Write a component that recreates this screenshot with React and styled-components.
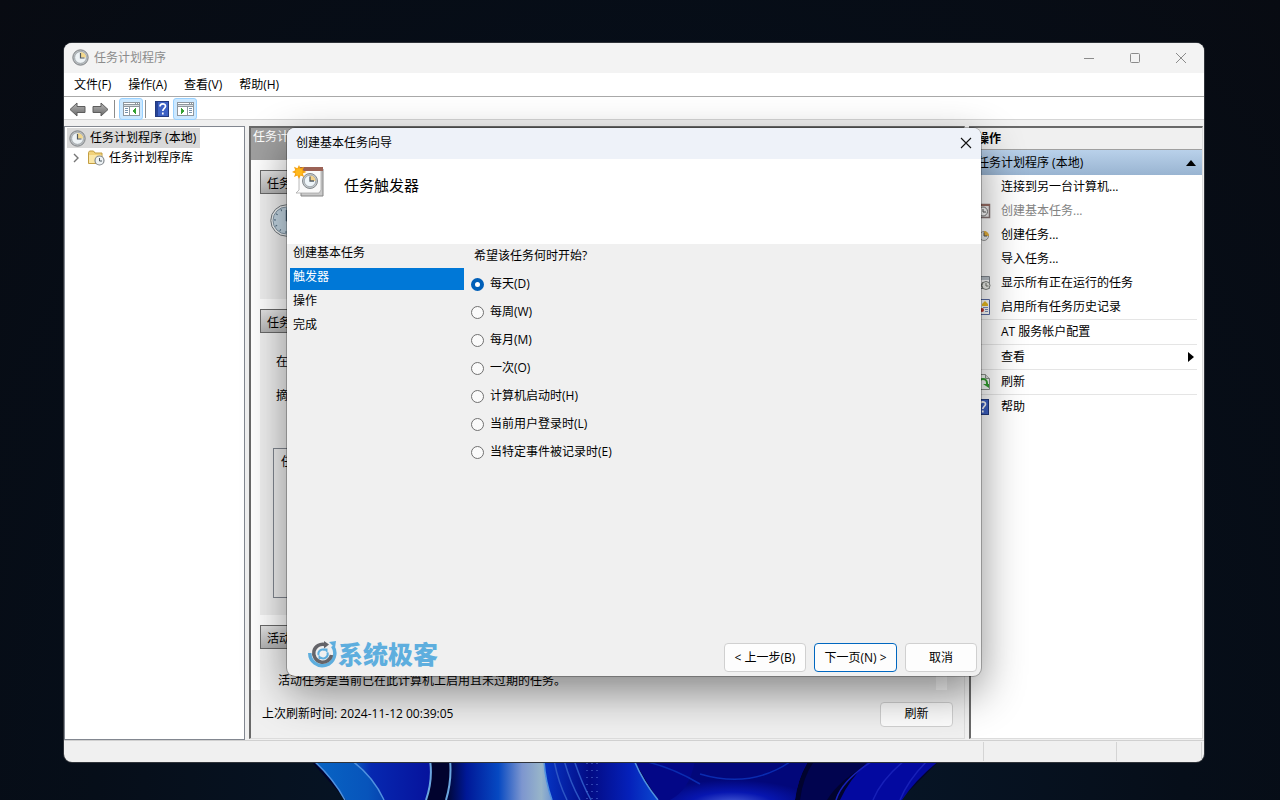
import React, { useState } from "react";
import styled, { createGlobalStyle, css } from "styled-components";

const triggers = [
  "每天(D)",
  "每周(W)",
  "每月(M)",
  "一次(O)",
  "计算机启动时(H)",
  "当前用户登录时(L)",
  "当特定事件被记录时(E)"
];

const steps = ["创建基本任务", "触发器", "操作", "完成"];

const App = () => {
  const [trigger, setTrigger] = useState(0);

  return (
    <Desktop>
      <GlobalStyle />
      <Wallpaper />
      <Window>
        <TitleBar>
          <ClockIcon />
          <WindowTitle>任务计划程序</WindowTitle>
          <CaptionButton aria-label="最小化">
            <svg width="12" height="12" fill="none" stroke="#8b8b8b">
              <path d="M1 6.5h10" />
            </svg>
          </CaptionButton>
          <CaptionButton aria-label="最大化">
            <svg width="12" height="12" fill="none" stroke="#8b8b8b">
              <rect x="1.5" y="1.5" width="9" height="9" rx="1" />
            </svg>
          </CaptionButton>
          <CaptionButton aria-label="关闭">
            <svg width="12" height="12" fill="none" stroke="#8b8b8b">
              <path d="M1 1l10 10M11 1L1 11" />
            </svg>
          </CaptionButton>
        </TitleBar>
        <MenuBar>
          <MenuButton>文件(F)</MenuButton>
          <MenuButton>操作(A)</MenuButton>
          <MenuButton>查看(V)</MenuButton>
          <MenuButton>帮助(H)</MenuButton>
        </MenuBar>
        <ToolBar>
          <ToolButton aria-label="后退">
            <ArrowIcon />
          </ToolButton>
          <ToolButton aria-label="前进">
            <ArrowIcon flip />
          </ToolButton>
          <Divider />
          <ToolButton $active aria-label="显示控制台树">
            <PaneIcon />
          </ToolButton>
          <Divider />
          <ToolButton aria-label="帮助">
            <HelpIcon />
          </ToolButton>
          <ToolButton $active aria-label="显示操作窗格">
            <PaneIcon right />
          </ToolButton>
        </ToolBar>

        <Body>
          <Tree>
            <TreeRoot>
              <ClockIcon />
              任务计划程序 (本地)
            </TreeRoot>
            <TreeChild>
              <svg width="8" height="10" fill="none" stroke="#767676" strokeWidth="1.4">
                <path d="M2 1l4 4-4 4" />
              </svg>
              <FolderIcon />
              任务计划程序库
            </TreeChild>
          </Tree>

          <Summary>
            <SummaryTitle>任务计</SummaryTitle>
            <SummaryScroll>
              <Section>
                <SectionHead>任务</SectionHead>
                <Overview>
                  <BigClockIcon />
                </Overview>
              </Section>
              <Section $grow>
                <SectionHead>任务</SectionHead>
                <Status>
                  <StatusText>在</StatusText>
                  <StatusText>摘</StatusText>
                  <TaskList>任</TaskList>
                </Status>
              </Section>
              <Section>
                <SectionHead>活动</SectionHead>
                <Active>活动任务是当前已在此计算机上启用且未过期的任务。</Active>
              </Section>
            </SummaryScroll>
            <SummaryFooter>
              上次刷新时间: 2024-11-12 00:39:05
              <RefreshButton>刷新</RefreshButton>
            </SummaryFooter>
          </Summary>

          <Actions>
            <ActionsTitle>操作</ActionsTitle>
            <ActionsGroup>
              任务计划程序 (本地)
              <svg width="10" height="6">
                <path d="M0 6L5 0l5 6z" />
              </svg>
            </ActionsGroup>
            <Action>
              <IconSlot />
              连接到另一台计算机...
            </Action>
            <Action disabled>
              <IconSlot>
                <TaskIcon />
              </IconSlot>
              创建基本任务...
            </Action>
            <Action>
              <IconSlot>
                <NewTaskIcon />
              </IconSlot>
              创建任务...
            </Action>
            <Action>
              <IconSlot />
              导入任务...
            </Action>
            <Action>
              <IconSlot>
                <RunningIcon />
              </IconSlot>
              显示所有正在运行的任务
            </Action>
            <Action>
              <IconSlot>
                <HistoryIcon />
              </IconSlot>
              启用所有任务历史记录
            </Action>
            <Rule />
            <Action>
              <IconSlot />
              AT 服务帐户配置
            </Action>
            <Rule />
            <Action>
              <IconSlot />
              查看
              <SubmenuArrow width="6" height="10">
                <path d="M0 0l6 5-6 5z" />
              </SubmenuArrow>
            </Action>
            <Rule />
            <Action>
              <IconSlot>
                <RefreshIcon />
              </IconSlot>
              刷新
            </Action>
            <Rule />
            <Action>
              <IconSlot>
                <HelpIcon />
              </IconSlot>
              帮助
            </Action>
          </Actions>
        </Body>

        <StatusBar>
          <StatusCell $width={133} />
          <StatusCell $width={85} />
          <StatusCell $width={3} />
        </StatusBar>

        <Dialog role="dialog" aria-label="创建基本任务向导">
          <DialogTitle>
            创建基本任务向导
            <CloseButton aria-label="关闭">
              <svg width="12" height="12" fill="none" stroke="#111" strokeWidth="1.1">
                <path d="M1 1l10 10M11 1L1 11" />
              </svg>
            </CloseButton>
          </DialogTitle>
          <DialogHeader>
            <WizardIcon />
            <Heading>任务触发器</Heading>
          </DialogHeader>
          <DialogBody>
            <Steps>
              {steps.map((step, i) => (
                <Step key={step} $current={i === 1}>
                  {step}
                </Step>
              ))}
            </Steps>
            <Options>
              <Legend>希望该任务何时开始?</Legend>
              {triggers.map((label, i) => (
                <Option key={label}>
                  <Radio
                    type="radio"
                    name="trigger"
                    checked={trigger === i}
                    onChange={() => setTrigger(i)}
                  />
                  {label}
                </Option>
              ))}
            </Options>
          </DialogBody>
          <DialogFooter>
            <Brand>
              <BrandIcon />
              系统极客
            </Brand>
            <Button $width={82}>&lt; 上一步(B)</Button>
            <Button $width={83} $primary>
              下一页(N) &gt;
            </Button>
            <Button $width={72}>取消</Button>
          </DialogFooter>
        </Dialog>
      </Window>
    </Desktop>
  );
};

export default App;

const ClockIcon = () => (
  <svg width="17" height="17" viewBox="0 0 17 17">
    <circle cx="8.5" cy="8.5" r="7.7" fill="#b9bdc0" stroke="#808487" />
    <circle cx="8.5" cy="8.5" r="5.8" fill="#eef3f6" stroke="#9aa0a4" strokeWidth=".7" />
    <path d="M8.5 8.5V3A5.5 5.5 0 0 1 14 8.5z" fill="#f3d88c" />
    <path d="M8.5 4v5h4" fill="none" stroke="#50585e" strokeWidth="1.2" />
  </svg>
);

const BigClockIcon = () => (
  <svg width="33" height="33" viewBox="0 0 33 33">
    <circle cx="16.5" cy="16.5" r="15.7" fill="#f4f6f7" stroke="#70777c" />
    <circle cx="16.5" cy="16.5" r="13.5" fill="#c6d9e6" stroke="#8296a5" />
    <circle
      cx="16.5"
      cy="16.5"
      r="11.5"
      fill="none"
      stroke="#5b7487"
      strokeWidth="2"
      strokeDasharray="1 5"
    />
    <path d="M16.5 6v11M16.5 17h7" fill="none" stroke="#48647a" strokeWidth="1.5" />
  </svg>
);

const ArrowIcon = ({ flip }) => (
  <svg width="17" height="15" viewBox="0 0 17 15">
    <defs>
      <linearGradient id="arrow" x2="0" y2="1">
        <stop stopColor="#b7b7b7" />
        <stop offset="1" stopColor="#696969" />
      </linearGradient>
    </defs>
    <path
      d="M1 7.5L8 1v3.500h8v6H8V14z"
      fill="url(#arrow)"
      stroke="#5d5d5d"
      transform={flip ? "matrix(-1 0 0 1 17 0)" : undefined}
    />
  </svg>
);

const PaneIcon = ({ right }) => (
  <svg width="17" height="14" viewBox="0 0 17 14" shapeRendering="crispEdges">
    <path d="M0 0h17v14H0z" fill="#8f979e" />
    <path d="M1 1h11v1H1zM13 1h1v1h-1zM15 1h1v1h-1z" fill="#fff" />
    <path d="M1 3h15v1H1z" fill="#d8dde1" />
    <path d={right ? "M1 5h9v8H1zM11 5h5v8h-5z" : "M1 5h5v8H1zM7 5h9v8H7z"} fill="#fff" />
    <path
      d={right ? "M12 6.5h3M12 8.5h3M12 10.5h3" : "M2 6.5h3M2 8.5h3M2 10.5h3"}
      stroke="#7893ad"
    />
    <path d={right ? "M4 6l4 3-4 3z" : "M13 6L9 9l4 3z"} fill="#35a132" />
  </svg>
);

const HelpIcon = () => (
  <svg width="14" height="16" viewBox="0 0 14 16">
    <rect x=".5" y=".5" width="13" height="15" fill="#3d61c4" stroke="#223a80" />
    <path d="M1 1h2v14H1z" fill="#274497" />
    <path
      d="M5 5.5C5 2 10.500 2 10.500 5.200c0 2-2.700 2.300-2.700 4.800M7.800 11.500v2"
      fill="none"
      stroke="#fff"
      strokeWidth="1.7"
    />
  </svg>
);

const FolderIcon = () => (
  <svg width="17" height="16" viewBox="0 0 17 16">
    <path d="M.5 2.5L1.500 1h4L7 3h7v10.500H.5z" fill="#f1d27b" stroke="#c39e43" />
    <path d="M1 5h12.500v8H1z" fill="#fae7a8" />
    <circle cx="11.5" cy="10.5" r="4.5" fill="#edf2f5" stroke="#82888d" strokeWidth="1.2" />
    <path d="M11.5 8v3H14" fill="none" stroke="#4b5960" />
  </svg>
);

const TaskIcon = () => (
  <svg width="16" height="16" viewBox="0 0 16 16">
    <rect x="1.5" y="1.5" width="13" height="13" fill="#f0eeee" stroke="#877" strokeWidth="1.5" />
    <path d="M1 1h14v2H1z" fill="#9b6f65" />
    <circle cx="8" cy="8.5" r="4.5" fill="#fff" stroke="#777" />
    <path d="M8 6v3h3" fill="none" stroke="#555" />
  </svg>
);

const NewTaskIcon = () => (
  <svg width="16" height="16" viewBox="0 0 16 16">
    <circle cx="9" cy="9" r="4.5" fill="#eef2f4" stroke="#999" />
    <path d="M9 9V4a5 5 0 0 1 5 5z" fill="#e9b33d" />
    <path d="M9 5.5V9h3" fill="none" stroke="#555" />
  </svg>
);

const RunningIcon = () => (
  <svg width="16" height="16" viewBox="0 0 16 16">
    <path d="M.5 1.5h14v12H.5z" fill="#fff" stroke="#838990" />
    <path d="M1 2h13v3H1z" fill="#bac2ca" />
    <circle cx="11" cy="10.5" r="4" fill="#f3f4ef" stroke="#7d817d" />
    <path d="M11 8v3h2.500M5 8l3 6M8 7l-4 6" fill="none" stroke="#70756d" />
  </svg>
);

const HistoryIcon = () => (
  <svg width="16" height="16" viewBox="0 0 16 16">
    <path d="M1.5 .5h13v15h-13z" fill="#fff" stroke="#596ba4" />
    <path d="M10 2l3 3v2H7V5z" fill="#edbe22" />
    <path d="M8 8.500h5M10 10.500h3M10 12.500h3" stroke="#7b91bd" />
    <circle cx="7" cy="11" r="2" fill="#bd3431" />
  </svg>
);

const RefreshIcon = () => (
  <svg width="16" height="16" viewBox="0 0 16 16">
    <path d="M1.5 .5h9l4 4v11h-13z" fill="#f7faf7" stroke="#8c938c" />
    <path d="M10.5 .5v4h4" fill="#ddd" stroke="#8c938c" />
    <path d="M4 9a4 4 0 0 1 8 0v2" fill="none" stroke="#34a030" strokeWidth="2" />
    <path d="M8 10h6v4z" fill="#34a030" />
  </svg>
);

const WizardIcon = () => (
  <svg width="33" height="33" viewBox="0 0 33 33">
    <path d="M9 4h22v27H9z" fill="#c9c9c9" stroke="#858585" />
    <path d="M7 4h22v21l-2 3H4l3-3z" fill="#fafafa" stroke="#a8a8a8" strokeWidth=".8" />
    <path d="M7 2h24v4H7z" fill="#9b6256" />
    <circle cx="18" cy="16" r="7.500" fill="#c4c9cc" stroke="#83898d" />
    <circle cx="18" cy="16" r="5.700" fill="#eef5f9" stroke="#90979c" strokeWidth=".7" />
    <path d="M18 16v-5.500a5.500 5.500 0 0 1 5.500 5.500z" fill="#f4d38b" />
    <path d="M18 11.500V16h4" fill="none" stroke="#555f67" strokeWidth="1.3" />
    <path
      d="M7 0l1.500 3.300L12 1.800l-1.300 3.500L14.500 7l-3.800 1.500 1.500 3.600-3.600-1.500L7 14l-1.600-3.400L2 12.100l1.300-3.600L0 7l3.300-1.700L2 1.800l3.400 1.500z"
      fill="#f5a313"
    />
    <circle cx="7" cy="7" r="3.500" fill="#ffb91c" />
  </svg>
);

const BrandIcon = () => (
  <svg width="30" height="27" viewBox="0 0 30 27" fill="none">
    <path d="M1.800 12A12.500 12.500 0 1 0 24.500 5" stroke="#5eaede" strokeWidth="3.500" />
    <path d="M21 1l7-1-1 7z" fill="#5eaede" />
    <path d="M17 3.500A9 9 0 1 0 23.500 14" stroke="#646469" strokeWidth="3.500" />
    <path d="M16 0l5 3.500-5 4z" fill="#646469" />
    <path d="M10.500 14a4.500 4.500 0 0 1 6.500-5" stroke="#5eaede" strokeWidth="2" />
    <path d="M19.500 11.500A4.500 4.500 0 0 1 12.500 16.500" stroke="#5eaede" strokeWidth="2" />
    <path d="M15 7.500h4.500V12z" fill="#5eaede" />
    <path d="M10.500 13.500V18H15z" fill="#5eaede" />
  </svg>
);

const Wallpaper = () => (
  <Bloom viewBox="0 0 660 40" preserveAspectRatio="none" aria-hidden="true">
    <defs>
      <linearGradient id="petalA">
        <stop stopColor="#0865c4" />
        <stop offset=".5" stopColor="#0754bb" />
        <stop offset="1" stopColor="#021a94" />
      </linearGradient>
      <linearGradient id="petalB">
        <stop stopColor="#0865c4" />
        <stop offset=".25" stopColor="#0628b0" />
        <stop offset="1" stopColor="#06129c" />
      </linearGradient>
      <linearGradient id="core">
        <stop stopColor="#00052c" />
        <stop offset=".2" stopColor="#001897" />
        <stop offset=".5" stopColor="#0649c2" />
        <stop offset=".72" stopColor="#7d96cf" />
        <stop offset=".9" stopColor="#98b5c9" />
        <stop offset="1" stopColor="#7097d3" />
      </linearGradient>
      <linearGradient id="petalC">
        <stop stopColor="#0635c4" />
        <stop offset=".4" stopColor="#030b84" />
        <stop offset=".75" stopColor="#0521ba" />
        <stop offset="1" stopColor="#0b48d0" />
      </linearGradient>
      <radialGradient id="petalD" cx=".45" cy="1.1" r=".6">
        <stop stopColor="#4b60d8" />
        <stop offset=".5" stopColor="#0716b0" />
        <stop offset="1" stopColor="#02077a" />
      </radialGradient>
    </defs>
    <path d="M10 0h630l-40 40H46z" fill="#01032e" />
    <path d="M13 0h70l40 40H46Q31 17 13 0z" fill="url(#petalA)" />
    <path d="M51 0h79q4 18-4 40H83Q73 15 51 0z" fill="url(#petalB)" />
    <path d="M150 0h94q1 20 8 40H145q7-20 5-40z" fill="url(#core)" />
    <path d="M244 0h90q11 23 24 40H252q-7-20-8-40z" fill="url(#petalC)" />
    <path d="M334 0h175q-12 20-14 40H358Q345 20 334 0z" fill="#030787" />
    <path d="M395 0h113q-10 18-13 40H370q20-10 25-40z" fill="url(#petalD)" />
    <path d="M515 0h62q-36 17-50 40h-27q3-24 15-40z" fill="#01044f" />
    <path d="M570 0h70q-24 19-38 40h-62q10-22 30-40z" fill="#0309a0" />
    <g fill="none" stroke="#4f91e0" strokeWidth="1.5">
      <path d="M13 0q20 18 32 40M51 0q22 16 33 40" />
      <path d="M130 0q3 20-4 40M150 0q2 20-4 40" stroke="#6ba6df" strokeWidth="2" />
      <path d="M244 0q1 20 8 40M334 0q8 20 24 40" />
      <path d="M254 0q4 22 13 40M264 0q6 22 16 40M274 0q8 24 17 40" stroke="#2c55c4" />
      <path d="M340 0q32 7 60 24M400 14q50 15 90-12" stroke="#0a2bb0" />
      <path d="M574 0q-32 20-38 40M605 0q-24 20-32 40M628 0q-20 20-28 40" stroke="#1720b8" />
    </g>
    <path
      d="M287 3v36M292 3v36M297 3v36"
      stroke="#5878d8"
      strokeWidth="1"
      strokeDasharray="1 6"
    />
  </Bloom>
);

const GlobalStyle = createGlobalStyle`
  * {
    box-sizing: border-box;
  }
  body {
    margin: 0;
    background: #060c16;
    color: #000;
    font: 12px/18px "Open Sans", "Noto Sans CJK SC", sans-serif;
  }
  button {
    font: inherit;
    color: inherit;
    border: 0;
    padding: 0;
    background: none;
    white-space: nowrap;
  }
  svg {
    flex: none;
  }
`;

const Desktop = styled.div`
  position: relative;
  display: flex;
  min-height: 100vh;
  padding: 43px 76px 38px 64px;
  overflow: hidden;
  background: radial-gradient(ellipse at 50% 100%, #061a30, #060e19 60%, #080b12);
`;

const Bloom = styled.svg`
  position: absolute;
  left: 50%;
  bottom: 0;
  width: 660px;
  height: 40px;
  margin-left: -340px;
`;

const Window = styled.div`
  position: relative;
  display: flex;
  flex-direction: column;
  flex: 1;
  min-width: 0;
  border-radius: 8px;
  overflow: hidden;
  background: #f0f0f0;
  box-shadow: 0 0 0 1px #30343a;
`;

const TitleBar = styled.header`
  display: flex;
  align-items: center;
  height: 30px;
  padding: 0 0 1px 8px;
  background: #f3f3f3;
  color: #8b8b8b;
`;

const WindowTitle = styled.span`
  flex: 1;
  padding-left: 5px;
`;

const CaptionButton = styled.button`
  display: flex;
  align-items: center;
  justify-content: center;
  width: 46px;
  height: 29px;
`;

const MenuBar = styled.nav`
  display: flex;
  gap: 17px;
  height: 24px;
  padding: 0 10px;
  background: #fff;
  border-bottom: 1px solid #aaa;
`;

const MenuButton = styled.button`
  height: 23px;
`;

const ToolBar = styled.div`
  display: flex;
  align-items: center;
  height: 23px;
  padding: 2px 0 0 2px;
  background: #fff;
  border-bottom: 1px solid #d5d5d5;
`;

const ToolButton = styled.button`
  display: flex;
  align-items: center;
  justify-content: center;
  width: 23px;
  height: 22px;
  ${({ $active }) =>
    $active &&
    css`
      width: 24px;
      background: #cce8ff;
      border: 1px solid #99d1ff;
      border-radius: 3px;
    `}
`;

const Divider = styled.span`
  width: 1px;
  height: 18px;
  margin: 0 4px 0 2px;
  background: #8c8c8c;
`;

const Body = styled.main`
  display: grid;
  grid-template-columns: 181px minmax(0, 1fr) 235px;
  gap: 4px;
  flex: 1;
  min-height: 0;
  padding-top: 6px;
`;

const Tree = styled.div`
  padding: 1px 2px;
  background: #fff;
  border: 1px solid #828790;
`;

const TreeRoot = styled.div`
  display: flex;
  align-items: center;
  gap: 4px;
  width: fit-content;
  height: 20px;
  padding: 0 4px 0 2px;
  background: #d9d9d9;
`;

const TreeChild = styled.div`
  display: flex;
  align-items: center;
  gap: 4px;
  height: 20px;
  padding-left: 5px;

  svg + svg {
    margin-left: 4px;
  }
`;

const Summary = styled.section`
  display: flex;
  flex-direction: column;
  min-height: 0;
  margin-bottom: 1px;
  border: 1px solid #dcdcdc;
  border-top: 2px solid #696969;
  border-left: 2px solid #696969;
`;

const SummaryTitle = styled.div`
  height: 32px;
  padding-left: 2px;
  background: #a0a0a0;
  color: #fff;
`;

const SummaryScroll = styled.div`
  display: flex;
  flex-direction: column;
  flex: 1;
  gap: 10px;
  min-height: 0;
  padding: 10px 11px 0 9px;
  background: #fff;
  border-right: 17px solid #f0f0f0;
  overflow: hidden;
`;

const Section = styled.div`
  display: flex;
  flex-direction: column;
  flex: ${({ $grow }) => ($grow ? "1" : "none")};
`;

const SectionHead = styled.div`
  height: 24px;
  padding: 4px 6px 0;
  background: linear-gradient(#e4e4e4, #b4b4b4);
  border: 1px solid #696969;
`;

const Overview = styled.div`
  height: 105px;
  padding: 10px;
  background: #f0f0f0;
`;

const Status = styled.div`
  display: flex;
  flex-direction: column;
  flex: 1;
  gap: 16px;
  padding: 20px 13px 17px;
  background: #f0f0f0;
`;

const StatusText = styled.div`
  padding-left: 3px;
`;

const TaskList = styled.div`
  flex: 1;
  margin-top: 27px;
  padding: 4px 7px;
  border: 1px solid #828790;
`;

const Active = styled.div`
  height: 41px;
  padding: 23px 18px 0;
  background: #f0f0f0;
`;

const SummaryFooter = styled.div`
  display: flex;
  align-items: center;
  justify-content: space-between;
  height: 48px;
  padding: 0 11px;
`;

const RefreshButton = styled.button`
  width: 73px;
  height: 25px;
  background: #fdfdfd;
  border: 1px solid #d0d0d0;
  border-radius: 4px;
`;

const Actions = styled.aside`
  display: flex;
  flex-direction: column;
  margin: 0 1px 1px 0;
  background: #fff;
  border: 1px solid #dcdcdc;
  border-top: 2px solid #696969;
  border-left: 2px solid #696969;
`;

const ActionsTitle = styled.div`
  height: 22px;
  padding: 2px 6px;
  background: #f0f0f0;
  border-bottom: 1px solid #a0a0a0;
  font-weight: 700;
`;

const ActionsGroup = styled.div`
  display: flex;
  align-items: center;
  justify-content: space-between;
  height: 25px;
  padding: 0 6px;
  background: linear-gradient(#b9d1ea, #99b4d1);
`;

const Action = styled.button`
  display: flex;
  align-items: center;
  gap: 10px;
  height: 24px;
  padding: 0 8px 0 4px;
  color: ${({ disabled }) => (disabled ? "#838383" : "#000")};
`;

const IconSlot = styled.span`
  display: flex;
  flex: none;
  width: 16px;
`;

const SubmenuArrow = styled.svg`
  margin-left: auto;
`;

const Rule = styled.div`
  height: 1px;
  margin-right: 5px;
  background: #e5e5e5;
`;

const StatusBar = styled.footer`
  display: flex;
  justify-content: flex-end;
  height: 22px;
  padding: 1px 0;
  border-top: 1px solid #d0d0d0;
`;

const StatusCell = styled.div`
  width: ${({ $width }) => $width}px;
  border-left: 1px solid #d4d4d4;
`;

const Dialog = styled.div`
  position: absolute;
  top: 85px;
  right: 223px;
  bottom: 86px;
  left: 223px;
  display: flex;
  flex-direction: column;
  background: #f0f0f0;
  border-radius: 8px;
  box-shadow: 0 0 0 1px rgba(0, 0, 0, 0.25), 0 16px 44px rgba(0, 0, 0, 0.45);
`;

const DialogTitle = styled.div`
  display: flex;
  align-items: center;
  justify-content: space-between;
  height: 31px;
  padding: 0 0 2px 9px;
  background: #eef2f9;
  border-radius: 8px 8px 0 0;
`;

const CloseButton = styled.button`
  display: flex;
  align-items: center;
  justify-content: center;
  width: 30px;
  height: 29px;
`;

const DialogHeader = styled.div`
  display: flex;
  gap: 19px;
  height: 85px;
  padding: 6px 5px;
  background: #fff;
`;

const Heading = styled.h1`
  margin: 8px 0 0;
  font-size: 15px;
  font-weight: 400;
  line-height: 24px;
`;

const DialogBody = styled.div`
  display: flex;
  flex: 1;
  gap: 7px;
  padding-left: 3px;
`;

const Steps = styled.ol`
  display: flex;
  flex-direction: column;
  gap: 2px;
  width: 174px;
  margin: 0;
  padding: 0;
  list-style: none;
`;

const Step = styled.li`
  height: 22px;
  padding: 0 3px;
  color: ${({ $current }) => ($current ? "#fff" : "#000")};
  background: ${({ $current }) => ($current ? "#0078d7" : "none")};
`;

const Options = styled.fieldset`
  margin: 0;
  padding: 0;
  border: 0;
`;

const Legend = styled.legend`
  padding: 3px 3px 5px;
`;

const Option = styled.label`
  display: flex;
  align-items: center;
  gap: 6px;
  height: 28px;
`;

const Radio = styled.input`
  appearance: none;
  width: 13px;
  height: 13px;
  margin: 0;
  background: #fafafa;
  border: 1px solid #707070;
  border-radius: 50%;
  &:checked {
    background: #fff;
    border: 4px solid #005fb8;
  }
`;

const DialogFooter = styled.div`
  display: flex;
  align-items: flex-end;
  gap: 8px;
  padding: 0 4px 4px 21px;
`;

const Brand = styled.div`
  display: flex;
  align-items: center;
  flex: 1;
  color: #5eaede;
  font-size: 25px;
  font-weight: 900;
  line-height: 36px;
`;

const Button = styled.button`
  width: ${({ $width }) => $width}px;
  height: 29px;
  background: #fdfdfd;
  border: 1px solid ${({ $primary }) => ($primary ? "#0067c0" : "#d0d0d0")};
  border-radius: 4px;
`;
